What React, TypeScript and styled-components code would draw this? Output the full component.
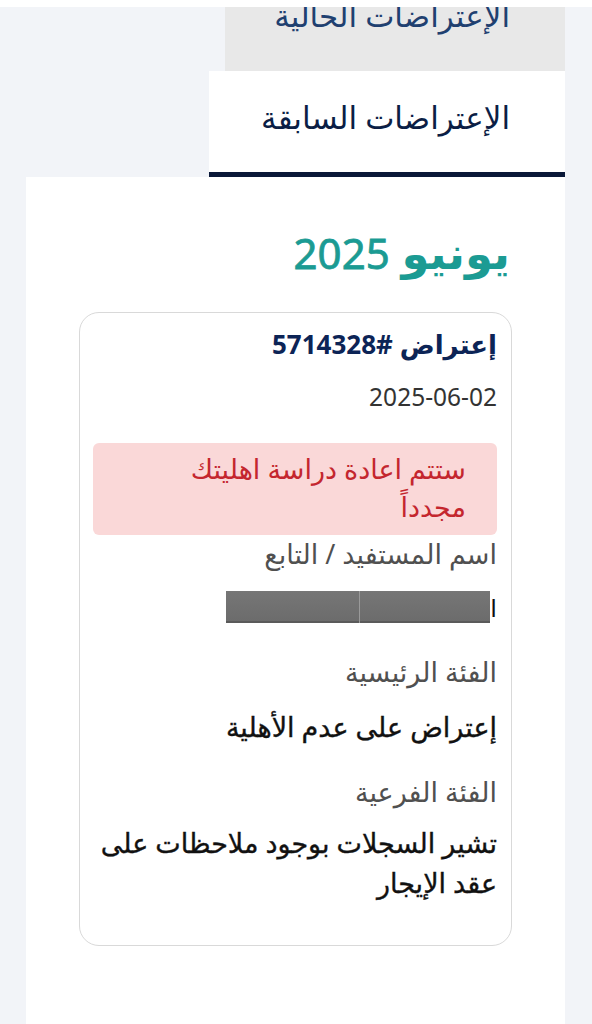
import React from "react";
import styled, { createGlobalStyle } from "styled-components";

const GlobalStyle = createGlobalStyle`
  html, body {
    margin: 0;
    padding: 0;
    background: #f2f4f8;
  }
  body {
    font-family: "Noto Sans", "DejaVu Sans", sans-serif;
  }
`;

const Page = styled.div`
  direction: rtl;
  min-height: 1024px;
  background: #f2f4f8;
  padding-right: 27px;
  padding-left: 26px;
`;

const TopStrip = styled.div`
  height: 7px;
  margin: 0 -27px 0 -26px;
  background: #ffffff;
`;

const TabStack = styled.div`
  display: flex;
  flex-direction: column;
  align-items: flex-start;
`;

const Tab = styled.div<{ $active?: boolean }>`
  box-sizing: border-box;
  width: ${(p) => (p.$active ? "356px" : "340px")};
  height: ${(p) => (p.$active ? "106px" : "64px")};
  padding-right: 55px;
  overflow: hidden;
  background: ${(p) => (p.$active ? "#ffffff" : "#e8e8e8")};
  border-bottom: ${(p) => (p.$active ? "5px solid #0a1838" : "none")};
  color: ${(p) => (p.$active ? "#0b1e45" : "#1f4070")};
  font-size: 31px;
  line-height: ${(p) => (p.$active ? "92px" : "40px")};
  white-space: nowrap;
`;

const TabLabel = styled.div<{ $clipped?: boolean }>`
  margin-top: ${(p) => (p.$clipped ? "-12px" : "0")};
`;

const Panel = styled.main`
  background: #ffffff;
  padding: 45px 53px 78px;
`;

const MonthHeading = styled.h2`
  margin: 0 2px 30px 0;
  font-size: 45px;
  line-height: 60px;
  font-weight: 600;
  color: #1b9b93;
`;

const Num = styled.span<{ $size: number }>`
  font-size: ${(p) => p.$size}px;
  font-weight: 400;
  line-height: 1;
  -webkit-text-stroke: 0.8px #1b9b93;
`;

const Card = styled.section`
  border: 1.5px solid #d9d9d9;
  border-radius: 20px;
  padding: 11px 14px 42px;
`;

const CardTitle = styled.h3`
  margin: 0;
  font-size: 26px;
  line-height: 40px;
  font-weight: 700;
  color: #0c2456;
`;

const DateText = styled.div`
  margin-top: 15px;
  font-size: 24.5px;
  line-height: 36px;
  color: #333333;
`;

const Notice = styled.div`
  margin: 28px 0 0 -1px;
  padding: 6.5px 31px 9px 40px;
  border-radius: 6px;
  background: #fad8d8;
  color: #c4262e;
  font-size: 27px;
  line-height: 38px;
`;

const FieldLabel = styled.div<{ $gap: number }>`
  margin-top: ${(p) => p.$gap}px;
  font-size: 27px;
  line-height: 36px;
  color: #505050;
`;

const FieldValue = styled.div<{ $gap: number; $tall?: boolean }>`
  margin-top: ${(p) => p.$gap}px;
  font-size: 27px;
  line-height: ${(p) => (p.$tall ? "40px" : "36px")};
  color: #111111;
  -webkit-text-stroke: 0.35px #111111;
`;

const RedactedRow = styled.div`
  display: flex;
  align-items: center;
  height: 33px;
  margin-top: 19px;
  font-size: 24px;
  color: #111111;
`;

const RedactBlock = styled.span<{ $w: number }>`
  display: block;
  width: ${(p) => p.$w}px;
  height: 32px;
  box-sizing: border-box;
  background: linear-gradient(#767676, #6c6c6c);
  border-bottom: 2px solid #5a5a5a;
`;

const Seam = styled.span`
  display: block;
  width: 1px;
  height: 32px;
  background: #9a9a9a;
`;

const Alif = styled.span`
  width: 7px;
  line-height: 33px;
`;

const claim = {
  month: "يونيو",
  year: "2025",
  id: "5714328",
  date: "2025-06-02",
  notice: "ستتم اعادة دراسة اهليتك مجدداً",
  mainCategory: "إعتراض على عدم الأهلية",
  subCategory: "تشير السجلات بوجود ملاحظات على عقد الإيجار",
};

const App = () => {
  return (
    <>
      <GlobalStyle />
      <Page>
        <TopStrip />
        <TabStack>
          <Tab>
            <TabLabel $clipped>الإعتراضات الحالية</TabLabel>
          </Tab>
          <Tab $active>
            <TabLabel>الإعتراضات السابقة</TabLabel>
          </Tab>
        </TabStack>
        <Panel>
          <MonthHeading>
            {claim.month} <Num $size={42}>{claim.year}</Num>
          </MonthHeading>
          <Card>
            <CardTitle>
              إعتراض <bdi dir="ltr">{claim.id}#</bdi>
            </CardTitle>
            <DateText>{claim.date}</DateText>
            <Notice>{claim.notice}</Notice>
            <FieldLabel $gap={1}>اسم المستفيد / التابع</FieldLabel>
            <RedactedRow>
              <Alif>ا</Alif>
              <RedactBlock $w={130} />
              <Seam />
              <RedactBlock $w={133} />
            </RedactedRow>
            <FieldLabel $gap={30.5}>الفئة الرئيسية</FieldLabel>
            <FieldValue $gap={18.5}>{claim.mainCategory}</FieldValue>
            <FieldLabel $gap={29}>الفئة الفرعية</FieldLabel>
            <FieldValue $gap={13} $tall>
              {claim.subCategory}
            </FieldValue>
          </Card>
        </Panel>
      </Page>
    </>
  );
};

export default App;
